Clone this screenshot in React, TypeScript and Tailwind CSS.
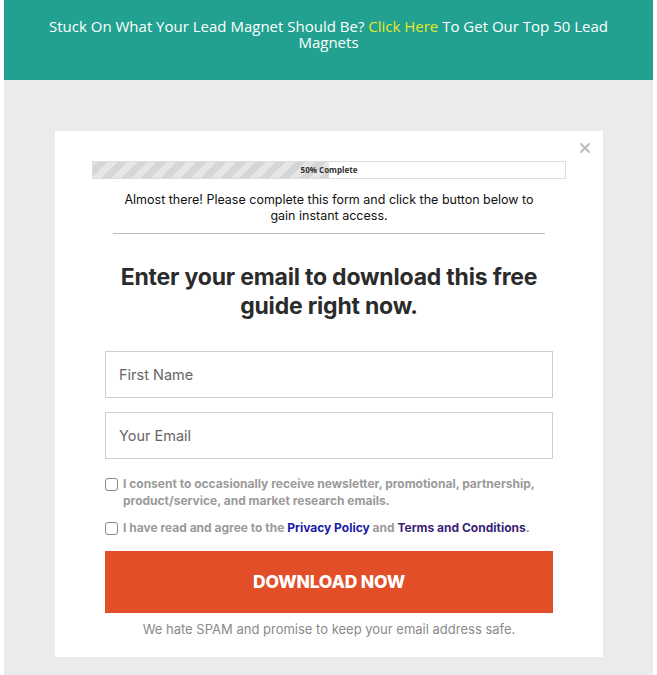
import { X } from 'lucide-react';

const stripes = {
  backgroundImage:
    'repeating-linear-gradient(-45deg, #d6d5d7 0px, #d6d5d7 7px, #e6e5e7 7px, #e6e5e7 14px)',
};

const App = () => {
  return (
    <div className="min-h-[675px] bg-white px-[4px] font-['Inter',sans-serif]">
      <div className="bg-[#22a190] h-[80px] pt-[18px] px-[44px]">
        <p className="text-center text-white text-[15px] leading-[16px] font-['Open_Sans',sans-serif]">
          Stuck On What Your Lead Magnet Should Be? <span className="text-[#e6e92a]">Click Here</span> To Get Our Top 50 Lead Magnets
        </p>
      </div>

      <div className="bg-[#ebeaec] h-[595px] pt-[51px] pl-[51px] pr-[51px]">
        <div className="relative bg-white w-[548px] h-[526px] px-[50px] pt-[30px]">
          <button className="absolute right-[10px] top-[9px] text-[#bbbbbb]">
            <X size={16} strokeWidth={3} />
          </button>

          <div className="relative mx-[-13px] h-[18px] border border-[#dedede] bg-white">
            <div className="h-full w-1/2" style={stripes} />
            <span className="absolute inset-0 flex items-center justify-center text-[8px] font-bold text-[#333] font-['Open_Sans',sans-serif]">
              50% Complete
            </span>
          </div>

          <p className="mt-[13px] text-center text-[12.5px] leading-[16px] text-[#111] px-[8px]">
            Almost there! Please complete this form and click the button below to gain instant access.
          </p>
          <div className="mx-[8px] mt-[9px] border-t border-[#bdbdbd]" />

          <h2 className="mt-[29px] text-center text-[23px] leading-[29px] font-bold text-[#2b2b2b] px-[10px] tracking-[-0.2px]">
            Enter your email to download this free guide right now.
          </h2>

          <input
            className="mt-[30px] block w-full h-[47px] border border-[#cfcfcf] px-[13px] text-[14.5px] text-[#555] placeholder:text-[#666] outline-none"
            placeholder="First Name"
          />
          <input
            className="mt-[14px] block w-full h-[47px] border border-[#cfcfcf] px-[13px] text-[14.5px] text-[#555] placeholder:text-[#666] outline-none"
            placeholder="Your Email"
          />

          <div className="mt-[16px] flex gap-[5px] text-[12px] leading-[17px] font-bold text-[#9a9a9a]">
            <span className="mt-[3px] shrink-0 w-[13px] h-[13px] rounded-[3px] border border-[#888] bg-white" />
            <span>
              I consent to occasionally receive newsletter, promotional, partnership, product/service, and market research emails.
            </span>
          </div>
          <div className="mt-[10px] flex gap-[5px] text-[12px] leading-[17px] font-bold text-[#9a9a9a]">
            <span className="mt-[3px] shrink-0 w-[13px] h-[13px] rounded-[3px] border border-[#888] bg-white" />
            <span>
              I have read and agree to the <span className="text-[#1a1aa8]">Privacy Policy</span> and{' '}
              <span className="text-[#3a1f78]">Terms and Conditions</span>.
            </span>
          </div>

          <button className="mt-[15px] block w-full h-[62px] bg-[#e24e27] text-white text-[17.5px] font-extrabold tracking-[-0.2px]">
            DOWNLOAD NOW
          </button>

          <p className="mt-[7px] text-center text-[13px] text-[#8a8a8a]">
            We hate SPAM and promise to keep your email address safe.
          </p>
        </div>
      </div>
    </div>
  );
};

export default App;
